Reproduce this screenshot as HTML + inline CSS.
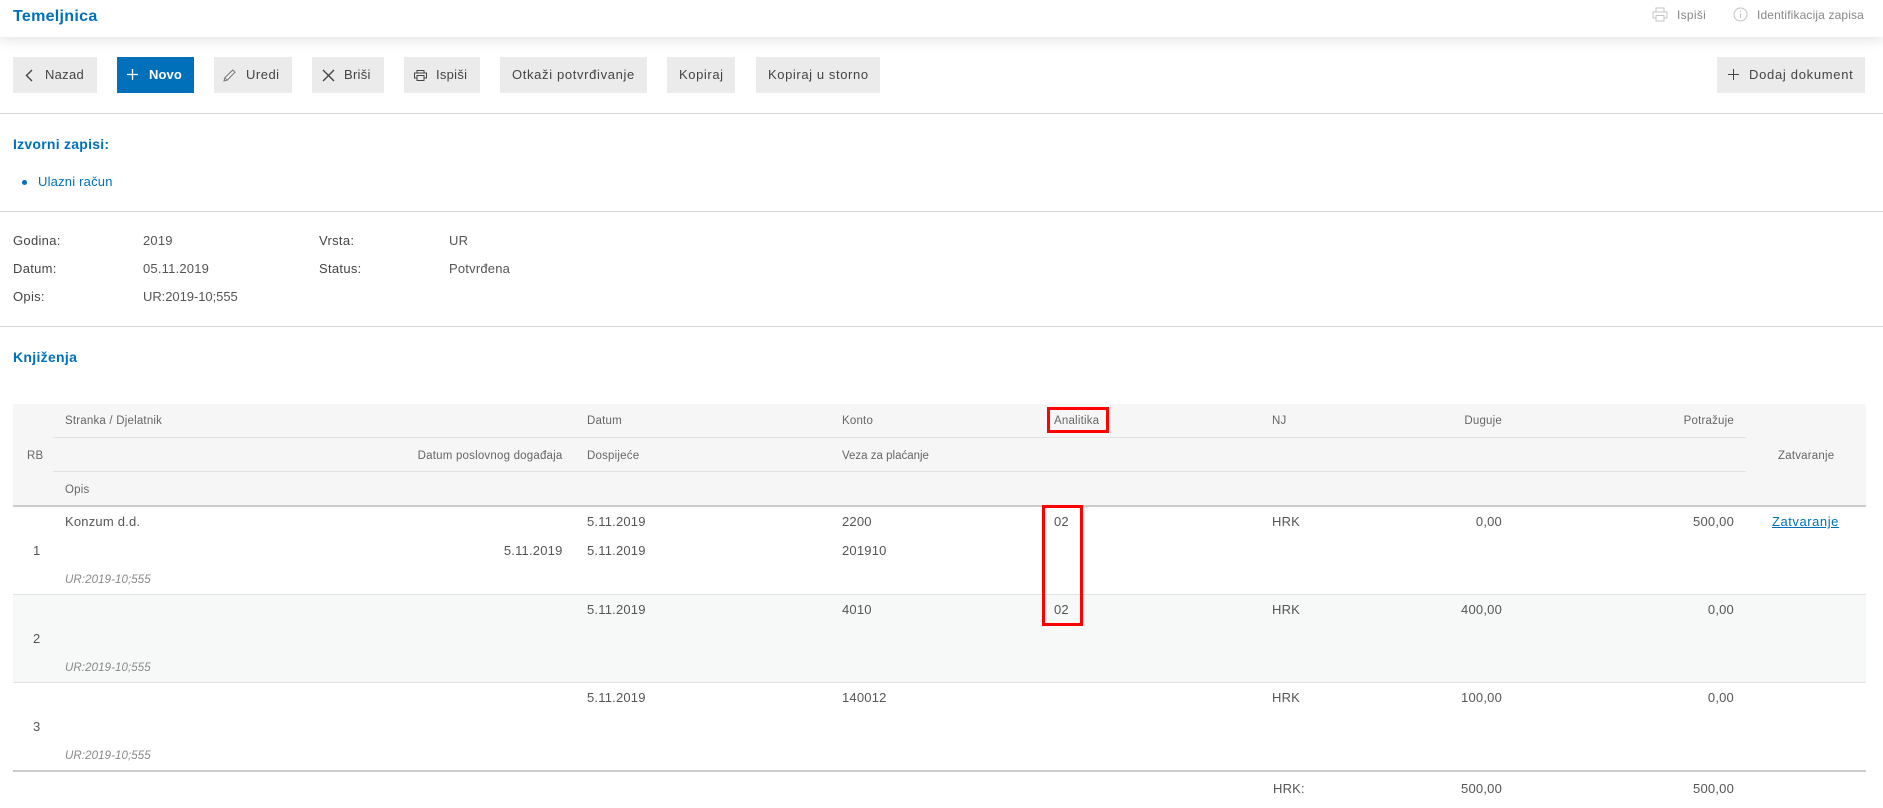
<!DOCTYPE html>
<html lang="hr"><head><meta charset="utf-8"><title>Temeljnica</title>
<style>
html,body{margin:0;padding:0;background:#fff}
body{width:1883px;height:808px;position:relative;overflow:hidden;font-family:"Liberation Sans",sans-serif;font-size:13px;color:#555}
.a,.t,.r,.b,.h,.hr{position:absolute}
.t,.r{line-height:20px;white-space:nowrap}
.t{letter-spacing:.2px}
.r{letter-spacing:.2px;text-align:right}
.h{line-height:20px;white-space:nowrap;font-size:11.5px;color:#666;letter-spacing:.2px}
.lb{color:#444;letter-spacing:.3px}
.em{font-size:11.5px;font-style:italic;color:#888;letter-spacing:.1px}
.blue{color:#0070ba;font-weight:bold}
.b{top:57px;height:36px;background:#ebebeb;color:#444}
.b span{position:absolute;top:8px;line-height:20px;white-space:nowrap;letter-spacing:.28px}
.hr{left:0;width:1883px;height:1px;background:#d6d6d6}
svg{position:absolute;fill:none}
</style></head><body>

<div class="a" style="left:0;top:0;width:1883px;height:37px;background:#fff;box-shadow:0 2px 14px rgba(0,0,0,.13)"></div>
<div class="t blue" style="left:13px;top:7px;font-size:16px;letter-spacing:.3px">Temeljnica</div>
<svg style="left:1652px;top:7px" width="16" height="15" viewBox="0 0 16 15" stroke="#c4c4c4" stroke-width="1"><path d="M4 5V1h8v4M4 11H1V5h14v6h-3M4 8.500h8V14H4z"/></svg>
<div class="t" style="left:1677px;top:5px;font-size:12px;color:#888;letter-spacing:.3px">Ispiši</div>
<svg style="left:1733px;top:7px" width="15" height="15" viewBox="0 0 15 15" stroke="#c4c4c4" stroke-width="1"><circle cx="7.500" cy="7.500" r="6.500"/><path d="M7.500 6.500v4.500M7.500 3.500v1.500"/></svg>
<div class="t" style="left:1757px;top:5px;font-size:12px;color:#888;letter-spacing:.14px">Identifikacija zapisa</div>

<div class="b" style="left:13px;width:84px"><svg style="left:12px;top:12px" width="8" height="13" viewBox="0 0 8 13" stroke="#444" stroke-width="1.400"><path d="M7 1L1.500 6.500L7 12"/></svg><span style="left:32px">Nazad</span></div>
<div class="b" style="left:117px;width:77px;background:#0070ba;color:#fff"><svg style="left:10px;top:12px" width="11" height="11" viewBox="0 0 11 11" stroke="#fff" stroke-width="1.300"><path d="M5.500 0v11M0 5.500h11"/></svg><span style="left:32px;font-weight:bold;letter-spacing:.1px">Novo</span></div>
<div class="b" style="left:214px;width:78px"><svg style="left:9px;top:12px" width="13" height="13" viewBox="0 0 13 13" stroke="#777" stroke-width="1"><path d="M1 12l.800-3.200L9.800 1l2.200 2.200L4.200 11.200zM1.800 8.800l2.400 2.400"/></svg><span style="left:32px;letter-spacing:.5px">Uredi</span></div>
<div class="b" style="left:312px;width:72px"><svg style="left:10px;top:12px" width="13" height="13" viewBox="0 0 13 13" stroke="#444" stroke-width="1.400"><path d="M1 1l11 11M12 1L1 12"/></svg><span style="left:32px">Briši</span></div>
<div class="b" style="left:404px;width:76px"><svg style="left:10px;top:13px" width="13" height="11" viewBox="0 0 13 11" stroke="#444" stroke-width="1"><path d="M3 3V.500h7V3M3 8H.500V3h12v5H10M3 5.500h7v5H3z"/></svg><span style="left:32px">Ispiši</span></div>
<div class="b" style="left:500px;width:147px"><span style="left:12px;letter-spacing:.65px">Otkaži potvrđivanje</span></div>
<div class="b" style="left:667px;width:68px"><span style="left:12px;letter-spacing:.6px">Kopiraj</span></div>
<div class="b" style="left:756px;width:124px"><span style="left:12px;letter-spacing:.6px">Kopiraj u storno</span></div>
<div class="b" style="left:1717px;width:148px"><svg style="left:11px;top:12px" width="11" height="11" viewBox="0 0 11 11" stroke="#444" stroke-width="1"><path d="M5.500 0v11M0 5.500h11"/></svg><span style="left:32px;letter-spacing:.7px">Dodaj dokument</span></div>

<div class="hr" style="top:113px"></div>
<div class="t blue" style="left:13px;top:134px;font-size:14px;letter-spacing:.25px">Izvorni zapisi:</div>
<div class="a" style="left:22px;top:180px;width:5px;height:5px;border-radius:50%;background:#0070ba"></div>
<div class="t" style="left:38px;top:172px;color:#0070ba">Ulazni račun</div>
<div class="hr" style="top:211px"></div>

<div class="t lb" style="left:13px;top:231px">Godina:</div><div class="t" style="left:143px;top:231px">2019</div>
<div class="t lb" style="left:319px;top:231px">Vrsta:</div><div class="t" style="left:449px;top:231px">UR</div>
<div class="t lb" style="left:13px;top:259px">Datum:</div><div class="t" style="left:143px;top:259px">05.11.2019</div>
<div class="t lb" style="left:319px;top:259px">Status:</div><div class="t" style="left:449px;top:259px">Potvrđena</div>
<div class="t lb" style="left:13px;top:287px">Opis:</div><div class="t" style="left:143px;top:287px;letter-spacing:-.05px">UR:2019-10;555</div>
<div class="hr" style="top:326px"></div>
<div class="t blue" style="left:13px;top:347px;font-size:14px;letter-spacing:.3px">Knjiženja</div>

<!-- table head -->
<div class="a" style="left:13px;top:404px;width:1853px;height:101px;background:#f6f6f6"></div>
<div class="a" style="left:53px;top:437px;width:1693px;height:1px;background:#e2e2e2"></div>
<div class="a" style="left:53px;top:471px;width:1693px;height:1px;background:#e2e2e2"></div>
<div class="a" style="left:13px;top:505px;width:1853px;height:2px;background:#ccc"></div>
<div class="h" style="left:27px;top:446px">RB</div>
<div class="h" style="left:65px;top:411px">Stranka / Djelatnik</div>
<div class="h" style="right:1320.500px;top:446px">Datum poslovnog događaja</div>
<div class="h" style="left:65px;top:480px">Opis</div>
<div class="h" style="left:587px;top:411px">Datum</div>
<div class="h" style="left:587px;top:446px">Dospijeće</div>
<div class="h" style="left:842px;top:411px">Konto</div>
<div class="h" style="left:842px;top:446px;letter-spacing:0">Veza za plaćanje</div>
<div class="h" style="left:1054px;top:411px">Analitika</div>
<div class="h" style="left:1272px;top:411px">NJ</div>
<div class="h" style="right:381px;top:411px">Duguje</div>
<div class="h" style="right:149px;top:411px">Potražuje</div>
<div class="h" style="left:1778px;top:446px">Zatvaranje</div>

<!-- row backgrounds -->
<div class="a" style="left:13px;top:594px;width:1853px;height:1px;background:#e2e2e2"></div>
<div class="a" style="left:13px;top:595px;width:1853px;height:87px;background:#f7f9f8"></div>
<div class="a" style="left:13px;top:682px;width:1853px;height:1px;background:#e2e2e2"></div>
<div class="a" style="left:13px;top:770px;width:1853px;height:2px;background:#ccc"></div>

<!-- row 1 -->
<div class="t" style="left:33px;top:541px">1</div>
<div class="t" style="left:65px;top:512px">Konzum d.d.</div>
<div class="r" style="right:1320.500px;top:541px">5.11.2019</div>
<div class="t em" style="left:65px;top:570px">UR:2019-10;555</div>
<div class="t" style="left:587px;top:512px">5.11.2019</div>
<div class="t" style="left:587px;top:541px">5.11.2019</div>
<div class="t" style="left:842px;top:512px">2200</div>
<div class="t" style="left:842px;top:541px">201910</div>
<div class="t" style="left:1054px;top:512px">02</div>
<div class="t" style="left:1272px;top:512px">HRK</div>
<div class="r" style="right:381px;top:512px">0,00</div>
<div class="r" style="right:149px;top:512px">500,00</div>
<div class="t" style="left:1772px;top:512px;color:#0070ba;text-decoration:underline;letter-spacing:.55px">Zatvaranje</div>

<!-- row 2 -->
<div class="t" style="left:33px;top:629px">2</div>
<div class="t em" style="left:65px;top:658px">UR:2019-10;555</div>
<div class="t" style="left:587px;top:600px">5.11.2019</div>
<div class="t" style="left:842px;top:600px">4010</div>
<div class="t" style="left:1054px;top:600px">02</div>
<div class="t" style="left:1272px;top:600px">HRK</div>
<div class="r" style="right:381px;top:600px">400,00</div>
<div class="r" style="right:149px;top:600px">0,00</div>

<!-- row 3 -->
<div class="t" style="left:33px;top:717px">3</div>
<div class="t em" style="left:65px;top:746px">UR:2019-10;555</div>
<div class="t" style="left:587px;top:688px">5.11.2019</div>
<div class="t" style="left:842px;top:688px">140012</div>
<div class="t" style="left:1272px;top:688px">HRK</div>
<div class="r" style="right:381px;top:688px">100,00</div>
<div class="r" style="right:149px;top:688px">0,00</div>

<!-- totals -->
<div class="t" style="left:1273px;top:779px">HRK:</div>
<div class="r" style="right:381px;top:779px">500,00</div>
<div class="r" style="right:149px;top:779px">500,00</div>

<!-- red boxes -->
<div class="a" style="left:1047px;top:407px;width:56px;height:20px;border:3px solid #f00"></div>
<div class="a" style="left:1042px;top:505px;width:35px;height:115px;border:3px solid #f00"></div>
</body></html>
